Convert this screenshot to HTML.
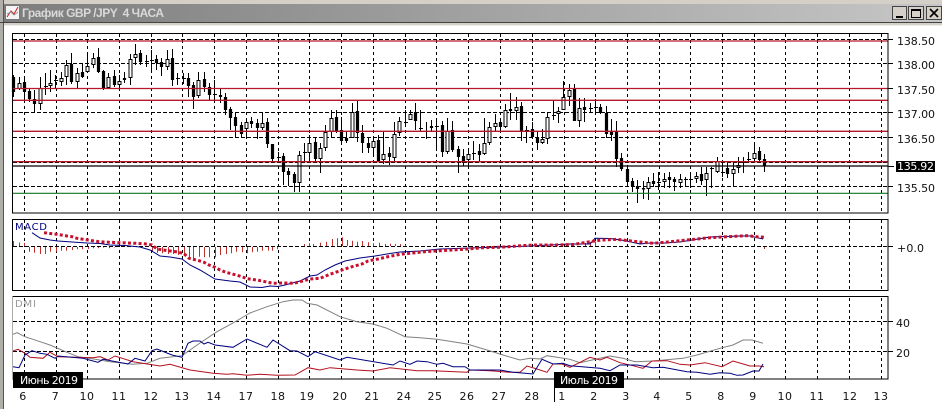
<!DOCTYPE html>
<html><head><meta charset="utf-8"><style>
html,body{margin:0;padding:0;background:#fff;width:942px;height:409px;overflow:hidden}
svg{display:block}
.l{font:11px "DejaVu Sans","Liberation Sans",sans-serif;fill:#111}
.m{text-anchor:middle;letter-spacing:.5px}
</style></head><body>
<svg width="942" height="409" viewBox="0 0 942 409" xmlns="http://www.w3.org/2000/svg" fill="none">
<defs><linearGradient id="t" x1="0" x2="1" y1="0" y2="0"><stop offset="0" stop-color="#7d7d7d"/><stop offset="1" stop-color="#c6c6c6"/></linearGradient></defs>
<rect width="942" height="409" fill="#fff"/>
<rect width="942" height="4" fill="#d4d0c8"/>
<rect x="0" y="0" width="3" height="409" fill="#b0aea8"/>
<rect x="3" y="0" width="1" height="409" fill="#555"/>
<rect x="4" y="4" width="938" height="18" fill="url(#t)"/>
<rect x="0" y="22" width="942" height="1" fill="#444"/>
<rect x="4" y="23" width="938" height="2" fill="#d4d0c8"/>
<rect x="4" y="25" width="938" height="1" fill="#efefef"/>
<!-- title icon -->
<rect x="5.5" y="5.5" width="14" height="14" fill="#f4f4f4" stroke="#777"/>
<path d="M7 17l4-6 3 3 4-7" stroke="#c02020"/>
<path d="M7 14l4-2 3 3 4-3" stroke="#999"/>
<text x="22" y="17" font-family="'Liberation Sans',sans-serif" font-weight="700" font-size="12" fill="#d9d9d9" textLength="142" lengthAdjust="spacing">График GBP /JPY &#160;4 ЧАСА</text>
<!-- window buttons -->
<g fill="#d4d0c8" stroke="#444"><rect x="892.5" y="6.5" width="14" height="13"/><rect x="908.5" y="6.5" width="15" height="13"/><rect x="926.5" y="6.5" width="15" height="13"/></g>
<path d="M896 17h7" stroke="#000" stroke-width="2"/>
<path d="M911.5 9.5h9v8h-9z" stroke="#000"/><path d="M911 10h10" stroke="#000" stroke-width="2"/>
<path d="M930 9l8 8M938 9l-8 8" stroke="#000" stroke-width="1.6"/>
<!-- grid -->
<path stroke="#000" stroke-dasharray="3 3" d="M24.5 34V379M56.5 34V379M87.5 34V379M119.5 34V379M151.5 34V379M182.5 34V379M214.5 34V379M246.5 34V379M278.5 34V379M309.5 34V379M341.5 34V379M373.5 34V379M405.5 34V379M436.5 34V379M468.5 34V379M500.5 34V379M532.5 34V379M564.5 34V379M595.5 34V379M627.5 34V379M659.5 34V379M690.5 34V379M722.5 34V379M754.5 34V379M785.5 34V379M817.5 34V379M849.5 34V379M881.5 34V379"/>
<path stroke="#000" stroke-dasharray="4 2" d="M13 39.5H888M13 63.5H888M13 88.5H888M13 112.5H888M13 137.5H888M13 162.5H888M13 186.5H888M13 246.5H888M13 321.5H888M13 351.5H888"/>
<rect x="5" y="213.5" width="883" height="5.5" fill="#fff"/>
<rect x="5" y="290.5" width="883" height="5" fill="#fff"/>
<!-- wicks -->
<path stroke="#000" d="M13.5 75V97M19.5 77V90M24.5 77V100M29.5 88V102M34.5 90V113M40.5 77V110M45.5 73V95M50.5 70V92M55.5 75V88M61.5 72V86M66.5 60V85M71.5 53V84M77.5 68V89M82.5 63V78M87.5 55V72M93.5 53V68M98.5 48V73M103.5 70V90M108.5 73V88M114.5 70V87M119.5 75V88M124.5 72V83M130.5 54V85M135.5 44V65M140.5 50V65M146.5 55V67M151.5 50V70M156.5 55V70M161.5 58V76M167.5 50V70M172.5 49V86M177.5 73V85M183.5 73V84M188.5 73V97M193.5 82V109M198.5 72V98M204.5 72V92M209.5 83V100M214.5 80V100M220.5 88V103M225.5 93V115M230.5 107V130M235.5 112V138M241.5 122V138M246.5 118V137M251.5 117V128M257.5 119V139M262.5 112V130M267.5 118V148M272.5 144V162M278.5 152V163M283.5 153V185M288.5 168V186M294.5 172V192M299.5 151V192M304.5 143V162M309.5 135V162M315.5 137V162M320.5 143V173M325.5 125V151M331.5 110V137M336.5 110V133M341.5 117V143M346.5 132V143M352.5 103V138M357.5 101V142M362.5 125V153M368.5 138V153M373.5 137V155M378.5 135V162M383.5 132V164M389.5 147V165M394.5 122V162M399.5 117V136M405.5 110V125M410.5 110V120M415.5 103V130M420.5 110V132M426.5 122V139M431.5 120V132M436.5 118V149M442.5 121V157M447.5 118V154M452.5 121V152M458.5 146V173M463.5 149V166M468.5 149V167M473.5 141V160M479.5 144V162M484.5 118V155M489.5 122V145M495.5 114V132M500.5 118V131M505.5 104V128M510.5 93V120M516.5 97V120M521.5 102V141M526.5 126V143M532.5 122V137M537.5 131V150M542.5 129V144M547.5 112V144M553.5 101V120M558.5 107V123M563.5 81V110M569.5 84V106M574.5 84V121M579.5 98V127M584.5 98V122M590.5 103V113M595.5 99V114M600.5 104V114M606.5 106V138M611.5 119V141M616.5 121V167M621.5 153V171M627.5 165V186M632.5 178V192M637.5 180V203M643.5 181V199M648.5 177V200M653.5 173V187M658.5 172V190M664.5 173V188M669.5 172V188M674.5 177V191M680.5 174V188M685.5 177V187M690.5 172V188M696.5 172V183M701.5 167V185M706.5 167V196M711.5 167V188M717.5 157V173M722.5 162V177M727.5 161V178M733.5 163V187M738.5 157V173M743.5 157V173M748.5 152V162M754.5 145V161M759.5 147V161M764.5 154V172"/>
<!-- black bodies -->
<path stroke="#000" stroke-width="3.2" d="M13.5 77V92M24.5 82V92M29.5 91V99M34.5 99V104M71.5 64V82M82.5 72V77M98.5 57V72M103.5 71V88M114.5 76V85M124.5 78V80M140.5 53V62M156.5 59V63M161.5 62V67M172.5 58V80M188.5 78V86M193.5 85V97M204.5 79V87M209.5 87V95M220.5 95V97M225.5 97V110M230.5 109V118M235.5 117V126M241.5 125V134M251.5 121V124M257.5 123V128M267.5 122V144M272.5 144V159M283.5 156V172M288.5 171V175M294.5 174V183M315.5 142V159M336.5 117V132M341.5 130V141M346.5 138V141M357.5 111V133M362.5 133V143M368.5 143V148M378.5 140V161M389.5 153V157M415.5 112V121M431.5 126V128M442.5 125V152M452.5 130V150M458.5 149V157M463.5 156V163M479.5 151V155M500.5 122V127M510.5 109V111M521.5 106V132M532.5 129V137M537.5 137V143M574.5 88V121M584.5 107V110M600.5 107V113M606.5 113V134M611.5 132V135M616.5 132V159M621.5 158V169M627.5 169V182M632.5 181V186M637.5 186V189M643.5 188V189.5M653.5 181V184M669.5 177V180M674.5 179V182M701.5 174V181M727.5 168V174M759.5 151V160M764.5 159V166"/>
<!-- white bodies -->
<path fill="#fff" stroke="#000" d="M18 83.500h3v5h-3zM39 88.500h3v15h-3zM49 83.500h3v2h-3zM60 78.500h3v3h-3zM65 65.500h3v11h-3zM76 73.500h3v8h-3zM86 66.500h3v5h-3zM92 58.500h3v6h-3zM107 77.500h3v10h-3zM118 81.500h3v3h-3zM129 59.500h3v18h-3zM134 54.500h3v3h-3zM166 59.500h3v7h-3zM197 80.500h3v15h-3zM245 122.500h3v6h-3zM261 123.500h3v4h-3zM298 155.500h3v27h-3zM308 143.500h3v9h-3zM319 148.500h3v10h-3zM324 132.500h3v15h-3zM330 118.500h3v13h-3zM351 112.500h3v25h-3zM372 141.500h3v6h-3zM382 154.500h3v5h-3zM393 134.500h3v23h-3zM398 121.500h3v11h-3zM409 114.500h3v5h-3zM446 131.500h3v20h-3zM467 154.500h3v5h-3zM483 143.500h3v10h-3zM488 127.500h3v15h-3zM494 123.500h3v3h-3zM504 110.500h3v16h-3zM515 107.500h3v3h-3zM541 139.500h3v3h-3zM546 117.500h3v21h-3zM557 111.500h3v2h-3zM562 97.500h3v12h-3zM568 90.500h3v6h-3zM578 108.500h3v12h-3zM647 182.500h3v6h-3zM663 179.500h3v2h-3zM679 179.500h3v3h-3zM695 176.500h3v2h-3zM705 173.500h3v6h-3zM716 161.500h3v10h-3zM732 169.500h3v4h-3zM737 165.500h3v2h-3zM742 161.500h3v1h-3zM753 153.500h3v5h-3z"/>
<!-- doji ticks -->
<path stroke="#000" d="M44 86.500h4M54 80.500h4M145 61.500h4M150 60.500h4M176 78.500h4M182 78.500h4M213 94.500h4M277 157.500h4M303 152.500h4M404 122.500h4M419 128.500h4M425 131.500h4M435 126.500h4M472 153.500h4M525 130.500h4M552 115.500h4M589 108.500h4M594 107.500h4M657 182.500h4M684 179.500h4M689 179.500h4M710 168.500h4M721 172.500h4M747 159.500h4"/>
<!-- horizontal levels -->
<path stroke="#b5172a" stroke-width="1.3" d="M13 41H888M13 88.500H888M13 100.300H888M13 131.300H888M13 161.700H888"/>
<path stroke="#000" stroke-width="1.2" d="M13 166H888"/>
<path stroke="#117a1e" stroke-width="1.2" d="M13 193.300H888"/>
<!-- MACD hist -->
<path stroke="#c0302c" d="M13.500 246V241M19.500 246V242.500M24.500 246V243M29.500 247V251.700M34.500 247V252.700M40.500 247V254M45.500 247V254M50.500 247V251.700M56.500 247V251.700M61.500 247V250.700M66.500 247V250.700M72.500 247V250M77.500 247V249.300M82.500 247V249.300M88.500 247V249M93.500 247V248.300M98.500 247V248.300M103.500 247V247.500M109.500 247V248.300M114.500 247V247.500M152.500 247V251.700M157.500 247V252.700M162.500 247V253.300M168.500 247V254M173.500 247V254M178.500 247V255M184.500 247V255.700M189.500 247V257.300M193.500 247V258.300M199.500 247V256.700M204.500 247V257.300M209.500 247V257.300M215.500 247V257.300M220.500 247V255M226.500 247V254M231.500 247V253.300M236.500 247V251.700M242.500 247V252.300M247.500 247V253.300M252.500 247V252.300M257.500 247V251.700M262.500 247V250.700M268.500 247V250.700M272.500 247V250.700M277.500 247V249.300M304.500 246V244M309.500 246V243.300M313.500 246V244M320.500 246V242.700M326.500 246V241.700M332.500 246V239M337.500 246V238.300M342.500 246V237.300M347.500 246V240M352.500 246V240.700M357.500 246V241.700M362.500 246V241M368.500 246V242.300M373.500 246V243.300M379.500 246V242.700M385.500 246V244M390.500 246V243.700M395.500 246V244M400.500 246V244M405.500 246V244.700M585.500 246V243M590.500 246V242M595.500 246V241.500M764.500 247V249"/>
<!-- MACD main -->
<path stroke="#000080" d="M32 232.700L40 238 50 240 58 241 72 242 87 243 100 243.500 110 245 125 245.500 140 247 150 250 160 256 170 257 182 259 190 265 200 270 215 279 230 281 240 282 250 287 262 287.500 270 286 278 286.500 285 285 300 281 310 276 317 275 325 270 335 265 345 261 360 258 375 256 390 253.500 400 252 420 251 440 249 470 248 500 247 530 246 570 244 590 244 595 238.300 610 238.500 625 240.600 640 244 650 243 665 243 680 242 710 237 740 236 750 236 763 239"/>
<!-- MACD signal dots -->
<path stroke="#c8102e" stroke-width="3" stroke-dasharray="3 2.300" d="M44 232.700L57 234.300 67 236 72 236.700 77 238.300 88 240 99 241.700 109 242.300 120 242.700 136 243.300 147 244 152 245 157 249 168 250.700 178 252 184 253.700 189 258.300 199 260.700 204 262.300 209 265 215 267.300 220 270 226 272.300 236 275 242 276.700 247 278.700 257 280 262 281 268 282.300 273 283.300 283 283 294 283.300 300 281.700 310 279 320 278.300 330 274.300 342 270 352 266.700 362 264 368 261 378 259 388 256.700 400 254.300 410 253.300 425 251.700 440 250.700 457 249.700 468 249 483 247.700 500 247.300 517 246 533 245 553 245 573 244.500 590 241.700 602 240 617 239.300 628 240.700 643 242.300 653 243.300 665 242.300 680 240.700 697 239 710 237.700 727 236.700 747 235.700 757 236.700 765 237.300"/>
<!-- DMI -->
<path stroke="#808080" d="M13 334.300L17 332.700 25 336.700 40 341.700 50 345 67 352.300 78 356.700 100 360 110 361.700 133 364.300 147 363.300 160 358.300 182 355.700 200 343 217 331.700 233 323 250 313 267 306.700 283 301.700 293 300 302 300 307 303.300 317 305 340 316.700 357 321.700 373 324 387 328.300 405 336.700 420 337.700 437 339.300 467 344 487 350 503 355 520 360 530 358.300 540 359 547 355.700 570 359.300 580 362.700 610 356 623 358.300 635 361.700 653 361 683 358.300 697 355 720 348.300 733 345 743 340 752 340 763 343.300"/>
<path stroke="#b3101f" d="M13 351L18 349.300 25 353.300 30 357.300 43 358.300 50 352.300 58 356.700 93 357.700 100 356.700 108 360 115 356 133 361.700 160 366 170 364.300 190 370 213 373.300 227 374.300 233 373.700 247 375.300 260 374.300 277 375.300 295 375 308 367.700 320 370 330 367.700 357 370 373 371 390 367.700 417 370.700 433 370.700 467 372.300 470 370 490 370.700 510 372.300 520 372.300 527 366 537 369 547 372.300 553 364 562 364 570 367.300 590 357.300 600 360 607 357.300 620 362.700 633 365.700 643 368.300 652 361 667 360.700 680 364.300 690 365 705 362.700 722 366.700 733 361 750 366 759 366 764 366.700"/>
<path stroke="#000080" d="M13 366.700L19 367.700 25 355 32 350.700 40 353.300 47 354.300 55 358.300 58 356 83 358.300 98 362.300 103 359.300 128 364 135 358.300 145 361 152 350.700 157 349 172 355 182 357.300 188 343.300 193 341 200 341 204 344 208 342.300 215 345 233 347.300 247 339 267 347.300 273 340 290 350.700 297 351 308 356.700 315 351.700 340 360 347 357.300 393 365 400 361 410 364.300 417 361 427 361.700 437 364.300 443 363.300 453 366.700 465 366.700 470 370 500 370 513 372.300 525 373.300 533 374 542 359.300 553 364 563 363.300 570 365.700 600 368.300 610 370.700 620 365 637 365 653 367.700 663 367.300 687 371.700 697 372.300 710 374.300 720 372.700 730 373.300 737 375.300 743 375 753 371 759 371 763 364"/>
<!-- frames -->
<rect x="12.500" y="33.500" width="875.500" height="179.500" stroke="#000"/>
<rect x="12.500" y="219.500" width="875.500" height="71" stroke="#000"/>
<path d="M12.500 296.500H888V379H12.500" stroke="#000"/>
<path d="M12.500 296.500V379" stroke="#aaa"/>
<!-- ticks -->
<path stroke="#000" d="M888 39.500h5M888 63.500h5M888 88.500h5M888 112.500h5M888 137.500h5M888 186.500h5M888 166.500h6M888 246.500h5M888 321.500h5M888 351.500h5"/>
<!-- axis labels -->
<g class="l">
<text x="897" y="45" textLength="38">138.50</text>
<text x="897" y="69" textLength="38">138.00</text>
<text x="897" y="94" textLength="38">137.50</text>
<text x="897" y="118" textLength="38">137.00</text>
<text x="897" y="143" textLength="38">136.50</text>
<text x="897" y="192" textLength="38">135.50</text>
<text x="897" y="252" textLength="27">+0.0</text>
<text x="896" y="327" textLength="14">40</text>
<text x="896" y="357" textLength="14">20</text>
</g>
<rect x="896" y="161" width="39" height="11" fill="#000"/>
<text x="897" y="170" font-family="'DejaVu Sans',sans-serif" font-size="11" fill="#fff" textLength="37">135.92</text>
<text x="15" y="230" font-family="'DejaVu Sans',sans-serif" font-size="10" fill="#000080" textLength="32">MACD</text>
<text x="15" y="307" font-family="'DejaVu Sans',sans-serif" font-size="10" fill="#999" textLength="21">DMI</text>
<!-- date labels -->
<g class="l m">
<text x="23" y="400">6</text><text x="55.500" y="400">7</text><text x="87" y="400">10</text><text x="119" y="400">11</text><text x="151" y="400">12</text><text x="182" y="400">13</text><text x="214" y="400">14</text><text x="246" y="400">17</text><text x="278" y="400">18</text><text x="307" y="400">19</text><text x="340" y="400">20</text><text x="372" y="400">21</text><text x="404" y="400">24</text><text x="435" y="400">25</text><text x="467" y="400">26</text><text x="499" y="400">27</text><text x="532" y="400">28</text><text x="562" y="400">1</text><text x="594" y="400">2</text><text x="626" y="400">3</text><text x="657" y="400">4</text><text x="689" y="400">5</text><text x="721" y="400">8</text><text x="753" y="400">9</text><text x="785" y="400">10</text><text x="817" y="400">11</text><text x="850" y="400">12</text><text x="881" y="400">13</text>
</g>
<!-- month flags -->
<rect x="13" y="372" width="70" height="16" fill="#000"/>
<text x="20" y="384" font-family="'DejaVu Sans',sans-serif" font-size="11" fill="#fff" textLength="58">Июнь 2019</text>
<rect x="554" y="372" width="70" height="16" fill="#000"/>
<path d="M554.500 388V402" stroke="#000"/>
<text x="560" y="384" font-family="'DejaVu Sans',sans-serif" font-size="11" fill="#fff" textLength="58">Июль 2019</text>
</svg>
</body></html>
